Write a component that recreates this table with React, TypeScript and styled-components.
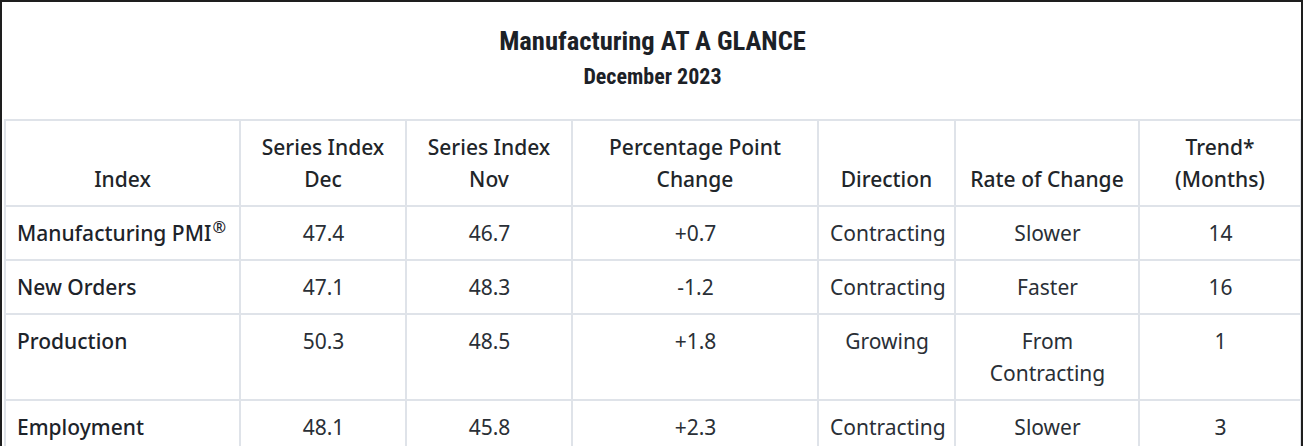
import React from "react";
import styled, { createGlobalStyle } from "styled-components";

const Global = createGlobalStyle`
  html, body { margin: 0; padding: 0; background: #ffffff; }
  body { font-family: "Noto Sans", "Open Sans", sans-serif; }
`;

const Frame = styled.div`
  box-sizing: border-box;
  width: 1303px;
  height: 446px;
  overflow: hidden;
  border-top: 2px solid #1e1e1e;
  border-left: 2px solid #1e1e1e;
  border-right: 2px solid #1e1e1e;
  padding: 0 0 0 2px;
  background: #fff;
`;

const Heading = styled.header`
  display: flex;
  flex-direction: column;
  align-items: center;
  padding-top: 22px;
  height: 117px;
  box-sizing: border-box;
  color: #1c2127;
  font-family: "Roboto Condensed", "DejaVu Sans Condensed", sans-serif;
  font-weight: 700;
`;

const Title = styled.h1`
  margin: 0;
  font-size: 26.6px;
  line-height: 34px;
  font-weight: 700;
`;

const Subtitle = styled.h2`
  margin: 4px 0 0;
  font-size: 22px;
  line-height: 30px;
  font-weight: 700;
`;

const Table = styled.table`
  width: 1296px;
  table-layout: fixed;
  border-collapse: collapse;
  border: 2px solid #dfe3e9;
  color: #212529;
  font-size: 21px;
  line-height: 32px;
`;

const Th = styled.th`
  border: 2px solid #dfe3e9;
  padding: 10px 10px;
  font-weight: 500;
  text-align: center;
  vertical-align: bottom;
`;

const Td = styled.td<{ $first?: boolean }>`
  border: 2px solid #dfe3e9;
  padding: 10px 10px 10px 11px;
  vertical-align: top;
  text-align: ${(p) => (p.$first ? "left" : "center")};
  font-weight: ${(p) => (p.$first ? 500 : 400)};
  color: ${(p) => (p.$first ? "#1d232a" : "#2a2f36")};
`;

const Sup = styled.sup`
  font-size: 0.78em;
  line-height: 0;
  margin-left: 1px;
`;

const widths = [235, 166, 166, 246, 137, 184, 162];

const headers: React.ReactNode[] = [
  "Index",
  <>Series Index<br />Dec</>,
  <>Series Index<br />Nov</>,
  <>Percentage Point<br />Change</>,
  "Direction",
  "Rate of Change",
  <>Trend*<br />(Months)</>,
];

type Row = [React.ReactNode, string, string, string, string, React.ReactNode, string];

const rows: Row[] = [
  [<>Manufacturing PMI<Sup>®</Sup></>, "47.4", "46.7", "+0.7", "Contracting", "Slower", "14"],
  ["New Orders", "47.1", "48.3", "-1.2", "Contracting", "Faster", "16"],
  ["Production", "50.3", "48.5", "+1.8", "Growing", <>From<br />Contracting</>, "1"],
  ["Employment", "48.1", "45.8", "+2.3", "Contracting", "Slower", "3"],
];

export default function App() {
  return (
    <>
      <Global />
      <Frame>
        <Heading>
          <Title>Manufacturing AT A GLANCE</Title>
          <Subtitle>December 2023</Subtitle>
        </Heading>
        <Table>
          <colgroup>
            {widths.map((w, i) => (
              <col key={i} style={{ width: w }} />
            ))}
          </colgroup>
          <thead>
            <tr>
              {headers.map((h, i) => (
                <Th key={i}>{h}</Th>
              ))}
            </tr>
          </thead>
          <tbody>
            {rows.map((r, i) => (
              <tr key={i}>
                {r.map((c, j) => (
                  <Td key={j} $first={j === 0}>
                    {c}
                  </Td>
                ))}
              </tr>
            ))}
          </tbody>
        </Table>
      </Frame>
    </>
  );
}
